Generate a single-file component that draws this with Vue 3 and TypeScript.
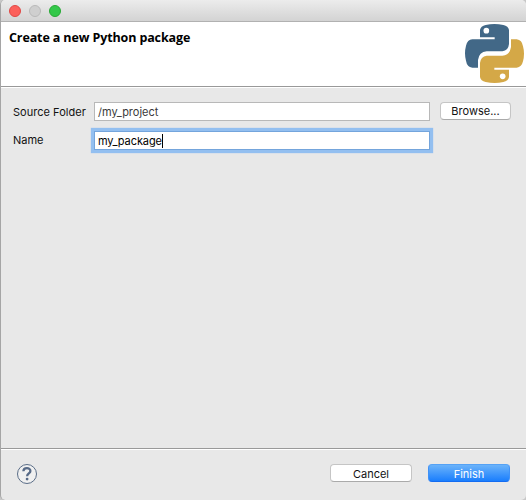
<script setup lang="ts">
import { ref } from 'vue'

const sourceFolder = ref('/my_project')
const packageName = ref('my_package')
const lights = ['close', 'minimize', 'zoom']
const snake = 'M45 40V18Q47 6 62 3Q88-3 115 3Q130 6 132 18V60Q130 80 112 82H65Q42 84 39 108V131H22Q6 129 3 110Q-3 88 3 65Q7 47 22 46H89V40Z'
</script>

<template>
  <div class="window">
    <div class="titlebar">
      <span v-for="light in lights" :key="light" class="light" :class="light"></span>
    </div>
    <header class="header">
      <h1>Create a new Python package</h1>
      <svg class="logo" viewBox="0 0 180 180" aria-hidden="true">
        <path fill="#426887" :d="snake" />
        <path fill="#d4a847" :d="snake" transform="rotate(180 88.5 88.5)" />
        <circle cx="64" cy="20" r="8.5" fill="#fff" />
        <circle cx="113" cy="157" r="8.5" fill="#fff" />
      </svg>
    </header>
    <main class="form">
      <span class="label source">Source Folder</span>
      <div class="field"><span class="folder">{{ sourceFolder }}</span></div>
      <button class="button browse">Browse...</button>
      <span class="label name">Name</span>
      <div class="field focused"><span class="package">{{ packageName }}</span><i class="caret"></i></div>
    </main>
    <footer class="footer">
      <svg class="help" viewBox="0 0 22 22" aria-label="Help">
        <circle cx="11" cy="11" r="9.5" fill="#f0f0f0" stroke="#5a6d87" />
        <path d="M7.4 8.3C7.5 4.2 14.4 4.2 14.4 8C14.4 10.3 11.1 10.5 11.1 13.2" fill="none" stroke="#586b88" stroke-width="2.3" />
        <circle cx="11.1" cy="16.1" r="1.4" fill="#586b88" />
      </svg>
      <button class="button cancel">Cancel</button>
      <button class="button finish">Finish</button>
    </footer>
  </div>
</template>

<style>
body { background: #c8c8c8; }
</style>

<style scoped>
.window {
  box-sizing: border-box;
  width: 526px;
  height: 500px;
  display: flex;
  flex-direction: column;
  border-left: 1px solid #a5a5a5;
  border-radius: 5px;
  background: #e8e8e8;
  overflow: hidden;
  font-family: Inter, "Liberation Sans", sans-serif;
  font-size: 11px;
  color: #111;
}
.titlebar {
  box-sizing: border-box;
  height: 22px;
  flex: none;
  display: flex;
  gap: 8px;
  padding: 5px 0 0 8px;
  background: linear-gradient(#ececec, #d3d3d3);
  border-bottom: 1px solid #b1b1b1;
}
.light { box-sizing: border-box; width: 12px; height: 12px; border-radius: 50%; border: 1px solid; }
.close { background: #fc605b; border-color: #df4845; }
.minimize { background: #cfcfcf; border-color: #b9b9b9; }
.zoom { background: #34c84a; border-color: #27a934; }
.header {
  box-sizing: border-box;
  height: 65px;
  flex: none;
  display: flex;
  justify-content: space-between;
  background: #fff;
  border-bottom: 1px solid #999;
}
h1 {
  margin: 0;
  padding: 7px 0 0 8px;
  font: 700 12.5px/18px "Open Sans", sans-serif;
  letter-spacing: -.12px;
  color: #000;
}
.logo { width: 60px; height: 60px; margin: 2px 1px 0 0; }
.form {
  box-sizing: border-box;
  height: 361px;
  flex: none;
  display: grid;
  grid-template-columns: 80px 337px 81px;
  grid-template-rows: 19px 19px;
  row-gap: 10px;
  padding: 14px 0 0 12px;
  align-content: start;
  border-top: 1px solid #fff;
}
.label { line-height: 21px; white-space: nowrap; }
.source { letter-spacing: .03px; }
.name { margin-top: -1px; }
.field {
  box-sizing: border-box;
  margin-left: 1px;
  height: 19px;
  display: flex;
  align-items: center;
  padding-left: 3px;
  border: 1px solid #b8b8b8;
  background: #fff;
  white-space: nowrap;
}
.folder { color: #3a3a3a; }
.package { letter-spacing: -.1px; }
.focused { border-color: #74a5dc; box-shadow: 0 0 0 2px #93bff0, 0 0 1px 3px #93bff0; color: #000; }
.caret { width: 1px; height: 14px; background: #000; }
.button {
  box-sizing: border-box;
  height: 18px;
  margin: 0;
  padding: 0;
  font: inherit;
  line-height: 16px;
  color: #111;
  background: #fff;
  border: 1px solid #c5c5c5;
  border-bottom-color: #aaa;
  border-radius: 4px;
}
.browse { margin-left: 10px; width: 71px; }
.footer {
  box-sizing: border-box;
  height: 52px;
  display: flex;
  align-items: flex-start;
  padding: 15px 16px 0 15px;
  border-top: 1px solid #999;
  box-shadow: inset 0 1px #fff;
}
.help { width: 22px; height: 22px; margin-top: -1px; }
.cancel, .finish { width: 82px; padding-top: 1px; }
.cancel { margin-left: auto; margin-right: 16px; }
.finish { color: #fff; border-color: #55a2f5 #3f91f7 #146cf1; background: linear-gradient(#6bb3fa, #1a7efd); }
</style>
